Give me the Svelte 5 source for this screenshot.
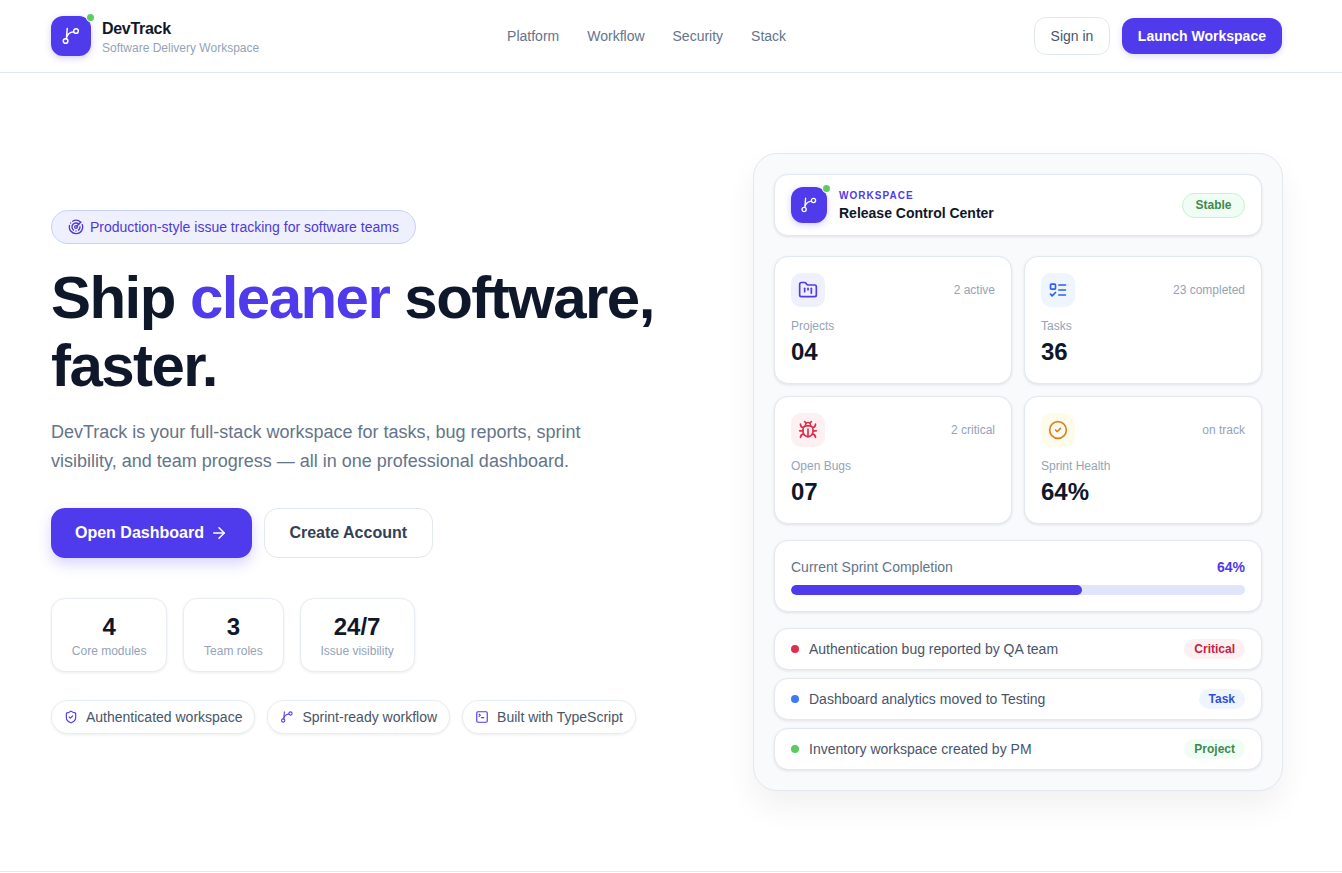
<script>
  const navLinks = ["Platform", "Workflow", "Security", "Stack"]
  const miniStats = [
    { value: "4", label: "Core modules" },
    { value: "3", label: "Team roles" },
    { value: "24/7", label: "Issue visibility" },
  ]
  const statCards = [
    { kind: "projects", tone: "indigo", note: "2 active", label: "Projects", value: "04" },
    { kind: "tasks", tone: "blue", note: "23 completed", label: "Tasks", value: "36" },
    { kind: "bugs", tone: "red", note: "2 critical", label: "Open Bugs", value: "07" },
    { kind: "health", tone: "amber", note: "on track", label: "Sprint Health", value: "64%" },
  ]
  const activity = [
    { text: "Authentication bug reported by QA team", tag: "Critical", tone: "red" },
    { text: "Dashboard analytics moved to Testing", tag: "Task", tone: "blue" },
    { text: "Inventory workspace created by PM", tag: "Project", tone: "green" },
  ]
  const sprintDone = 64
</script>

{#snippet branch(size)}
  <svg width={size} height={size} viewBox="0 0 24 24" fill="none" stroke="currentColor" stroke-width="1.8" stroke-linecap="round">
    <circle cx="5.5" cy="18" r="2.8" />
    <circle cx="18" cy="6" r="2.8" />
    <path d="M6.5 15.2 7.5 3" />
    <path d="M15.2 6.8C11 7.5 8 9 7 13" />
  </svg>
{/snippet}

{#snippet statIcon(kind)}
  <svg width="20" height="20" viewBox="0 0 24 24" fill="none" stroke="currentColor" stroke-width="2" stroke-linecap="round" stroke-linejoin="round">
    {#if kind == "projects"}
      <path d="M4 20h16a2 2 0 0 0 2-2V8a2 2 0 0 0-2-2h-7.93a2 2 0 0 1-1.66-.9l-.82-1.2A2 2 0 0 0 7.93 3H4a2 2 0 0 0-2 2v13c0 1.1.9 2 2 2Z" />
      <path d="M8 10v4" /><path d="M12 10v2" /><path d="M16 10v6" />
    {:else if kind == "tasks"}
      <rect x="3" y="5" width="6" height="6" rx="1" />
      <path d="m3 17 2 2 4-4" /><path d="M13 6h8" /><path d="M13 12h8" /><path d="M13 18h8" />
    {:else if kind == "bugs"}
      <path d="m8 2 1.88 1.88" /><path d="M14.12 3.88 16 2" />
      <path d="M9 7.13v-1a3.003 3.003 0 1 1 6 0v1" />
      <path d="M12 20c-3.3 0-6-2.7-6-6v-3a4 4 0 0 1 4-4h4a4 4 0 0 1 4 4v3c0 3.3-2.7 6-6 6" />
      <path d="M12 20v-9" /><path d="M6.53 9C4.6 8.8 3 7.1 3 5" /><path d="M6 13H2" />
      <path d="M3 21c0-2.1 1.7-3.9 3.8-4" /><path d="M20.97 5c0 2.1-1.6 3.8-3.5 4" />
      <path d="M22 13h-4" /><path d="M17.2 17c2.1.1 3.8 1.9 3.8 4" />
    {:else}
      <circle cx="12" cy="12" r="10" /><path d="m9 12 2 2 4-4" />
    {/if}
  </svg>
{/snippet}

<div class="page">
  <header>
    <div class="brand">
      <div class="logo">
        {@render branch(20)}
        <span class="online"></span>
      </div>
      <div>
        <div class="brand-name">DevTrack</div>
        <div class="brand-sub">Software Delivery Workspace</div>
      </div>
    </div>
    <nav>
      {#each navLinks as link}
        <a href="#top">{link}</a>
      {/each}
    </nav>
    <div class="actions">
      <button class="signin">Sign in</button>
      <button class="launch">Launch Workspace</button>
    </div>
  </header>

  <main>
    <section class="hero">
      <div class="badge">
        <svg width="16" height="16" viewBox="0 0 24 24" fill="none" stroke="currentColor" stroke-width="2" stroke-linecap="round" stroke-linejoin="round">
          <path d="M19.07 4.93A10 10 0 0 0 6.99 3.34" /><path d="M4 6h.01" />
          <path d="M2.29 9.62A10 10 0 1 0 21.31 8.35" /><path d="M16.24 7.76A6 6 0 1 0 8.23 16.67" />
          <path d="M12 18h.01" /><path d="M17.99 11.66A6 6 0 0 1 15.77 16.67" />
          <circle cx="12" cy="12" r="2" /><path d="m13.41 10.59 5.66-5.66" />
        </svg>
        Production-style issue tracking for software teams
      </div>
      <h1>Ship <span>cleaner</span> software, faster.</h1>
      <p class="lead">DevTrack is your full-stack workspace for tasks, bug reports, sprint visibility, and team progress — all in one professional dashboard.</p>
      <div class="cta">
        <button class="primary">
          Open Dashboard
          <svg width="18" height="18" viewBox="0 0 24 24" fill="none" stroke="currentColor" stroke-width="2" stroke-linecap="round" stroke-linejoin="round"><path d="M5 12h14" /><path d="m12 5 7 7-7 7" /></svg>
        </button>
        <button class="secondary">Create Account</button>
      </div>
      <div class="mini-stats">
        {#each miniStats as s}
          <div class="mini">
            <div class="mini-value">{s.value}</div>
            <div class="mini-label">{s.label}</div>
          </div>
        {/each}
      </div>
      <div class="chips">
        <div class="chip">
          <svg width="14" height="14" viewBox="0 0 24 24" fill="none" stroke="currentColor" stroke-width="2" stroke-linecap="round" stroke-linejoin="round">
            <path d="M20 13c0 5-3.5 7.5-7.66 8.95a1 1 0 0 1-.67-.01C7.5 20.5 4 18 4 13V6a1 1 0 0 1 1-1c2 0 4.5-1.2 6.24-2.72a1.17 1.17 0 0 1 1.52 0C14.51 3.81 17 5 19 5a1 1 0 0 1 1 1z" />
            <path d="m9 12 2 2 4-4" />
          </svg>
          Authenticated workspace
        </div>
        <div class="chip">
          {@render branch(14)}
          Sprint-ready workflow
        </div>
        <div class="chip">
          <svg width="14" height="14" viewBox="0 0 24 24" fill="none" stroke="currentColor" stroke-width="2" stroke-linecap="round" stroke-linejoin="round">
            <path d="m7 11 2-2-2-2" /><path d="M11 13h4" /><rect x="3" y="3" width="18" height="18" rx="2" />
          </svg>
          Built with TypeScript
        </div>
      </div>
    </section>

    <section class="panel">
      <div class="card panel-head">
        <div class="logo small">
          {@render branch(18)}
          <span class="online"></span>
        </div>
        <div class="panel-title">
          <div class="eyebrow">WORKSPACE</div>
          <div class="release">Release Control Center</div>
        </div>
        <span class="stable">Stable</span>
      </div>

      <div class="stat-grid">
        {#each statCards as c}
          <div class="card stat">
            <div class="stat-top">
              <div class="stat-icon {c.tone}">{@render statIcon(c.kind)}</div>
              <span class="stat-note">{c.note}</span>
            </div>
            <div class="stat-label">{c.label}</div>
            <div class="stat-value">{c.value}</div>
          </div>
        {/each}
      </div>

      <div class="card sprint">
        <div class="sprint-top">
          <span>Current Sprint Completion</span>
          <b>{sprintDone}%</b>
        </div>
        <div class="track"><div class="fill" style="width: {sprintDone}%"></div></div>
      </div>

      <div class="rows">
        {#each activity as a}
          <div class="card row">
            <span class="dot {a.tone}"></span>
            <span class="row-text">{a.text}</span>
            <span class="tag {a.tone}">{a.tag}</span>
          </div>
        {/each}
      </div>
    </section>
  </main>
</div>

<style>
  :global(body) {
    margin: 0;
    background: #fff;
    font-family: "Liberation Sans", Arial, sans-serif;
    color: #0f172a;
  }
  .page {
    height: 872px;
    display: flex;
    flex-direction: column;
    overflow: hidden;
  }
  header {
    height: 72px;
    flex: none;
    border-bottom: 1px solid #e2e8f0;
    padding: 0 60px 0 51px;
    display: flex;
    align-items: center;
    justify-content: space-between;
  }
  .brand {
    display: flex;
    align-items: center;
    gap: 11px;
  }
  .logo {
    position: relative;
    width: 40px;
    height: 40px;
    border-radius: 12px;
    background: #4f3bec;
    color: #fff;
    display: flex;
    align-items: center;
    justify-content: center;
    box-shadow: 0 2px 6px rgba(79, 57, 246, 0.25);
  }
  .logo.small {
    width: 36px;
    height: 36px;
    flex: none;
  }
  .online {
    position: absolute;
    top: -2.5px;
    right: -2.5px;
    width: 7px;
    height: 7px;
    border-radius: 50%;
    background: #5ecb62;
    box-shadow: 0 0 0 1px #fff;
  }
  .brand-name {
    padding-top: 2px;
    font-size: 16px;
    font-weight: 700;
    line-height: 22px;
    letter-spacing: -0.3px;
    color: #0f172a;
  }
  .brand-sub {
    font-size: 12px;
    line-height: 16px;
    color: #94a3b8;
  }
  nav {
    display: flex;
    gap: 28px;
  }
  nav a {
    font-size: 14px;
    color: #64748b;
    text-decoration: none;
  }
  .actions {
    display: flex;
    align-items: center;
    gap: 12px;
  }
  button {
    font-family: inherit;
    cursor: pointer;
  }
  .signin {
    height: 38px;
    padding: 0 15.5px;
    background: #fff;
    border: 1px solid #e2e8f0;
    border-radius: 12px;
    font-size: 14px;
    color: #475569;
  }
  .launch {
    height: 36px;
    padding: 0 16px;
    background: #4f3bec;
    border: none;
    border-radius: 12px;
    font-size: 14px;
    font-weight: 700;
    color: #fff;
    box-shadow: 0 2px 6px rgba(79, 57, 246, 0.2);
  }
  main {
    flex: 1;
    padding: 0 59px 0 51px;
    display: flex;
    align-items: center;
    justify-content: space-between;
    border-bottom: 1px solid #e2e8f0;
    min-height: 0;
  }
  .hero {
    width: 640px;
  }
  .badge {
    display: inline-flex;
    align-items: center;
    gap: 6px;
    box-sizing: border-box;
    height: 34px;
    padding: 0 16px;
    border: 1px solid #c6d2fb;
    border-radius: 999px;
    background: #eef0fd;
    font-size: 14px;
    color: #4f39d6;
  }
  h1 {
    margin: 20px 0 0;
    font-size: 60px;
    line-height: 68px;
    font-weight: 700;
    letter-spacing: -1.55px;
    color: #0f172a;
    max-width: 640px;
  }
  h1 span {
    color: #4f3bec;
  }
  .lead {
    margin: 18px 0 0;
    max-width: 576px;
    font-size: 18px;
    line-height: 29px;
    color: #64748b;
  }
  .cta {
    display: flex;
    gap: 12px;
    margin-top: 32px;
  }
  .primary {
    height: 50px;
    padding: 0 24px;
    display: flex;
    align-items: center;
    gap: 6px;
    background: #4f3bec;
    border: none;
    border-radius: 14px;
    font-size: 16px;
    font-weight: 700;
    color: #fff;
    box-shadow: 0 6px 14px rgba(79, 57, 246, 0.22);
  }
  .secondary {
    height: 50px;
    padding: 0 24.5px;
    background: #fff;
    border: 1px solid #e2e8f0;
    border-radius: 14px;
    font-size: 16px;
    font-weight: 700;
    color: #334155;
  }
  .mini-stats {
    display: flex;
    gap: 16px;
    margin-top: 40px;
  }
  .mini {
    height: 74px;
    box-sizing: border-box;
    padding: 2px 19.8px 0;
    border: 1px solid #e8edf4;
    border-radius: 14px;
    background: #fff;
    box-shadow: 0 1px 3px rgba(15, 23, 42, 0.08);
    display: flex;
    flex-direction: column;
    align-items: center;
    justify-content: center;
  }
  .mini-value {
    font-size: 24px;
    line-height: 28px;
    font-weight: 700;
    color: #0f172a;
  }
  .mini-label {
    margin-top: 2px;
    font-size: 12px;
    line-height: 16px;
    color: #94a3b8;
  }
  .chips {
    display: flex;
    gap: 12px;
    margin-top: 28px;
  }
  .chip {
    box-sizing: border-box;
    height: 34px;
    padding: 0 12px;
    display: flex;
    align-items: center;
    gap: 8px;
    border: 1px solid #e8edf4;
    border-radius: 999px;
    background: #fff;
    box-shadow: 0 1px 3px rgba(15, 23, 42, 0.08);
    font-size: 14px;
    color: #475569;
  }
  .chip svg {
    color: #4f3bec;
  }
  .panel {
    width: 530px;
    box-sizing: border-box;
    padding: 20px;
    border: 1px solid #e2e8f0;
    border-radius: 24px;
    background: #f8fafc;
    box-shadow: 0 16px 32px rgba(15, 23, 42, 0.06);
  }
  .card {
    background: #fff;
    border: 1px solid #e2e8f0;
    box-shadow: 0 1px 3px rgba(15, 23, 42, 0.1);
    box-sizing: border-box;
  }
  .panel-head {
    height: 62px;
    padding: 0 16px;
    border-radius: 14px;
    display: flex;
    align-items: center;
    gap: 12px;
  }
  .panel-title {
    flex: 1;
    padding-top: 2px;
  }
  .eyebrow {
    font-size: 10px;
    line-height: 14px;
    font-weight: 700;
    letter-spacing: 1.05px;
    color: #4f3bec;
  }
  .release {
    font-size: 14px;
    line-height: 20px;
    font-weight: 700;
    color: #0f172a;
  }
  .stable {
    padding: 0 12.5px;
    height: 25px;
    line-height: 23px;
    box-sizing: border-box;
    border: 1px solid #c8f2d0;
    border-radius: 999px;
    background: #f0fdf4;
    font-size: 12px;
    font-weight: 700;
    color: #3f8a4b;
  }
  .stat-grid {
    display: grid;
    grid-template-columns: 1fr 1fr;
    gap: 12px;
    margin-top: 20px;
  }
  .stat {
    height: 128px;
    padding: 16px;
    border-radius: 14px;
  }
  .stat-top {
    display: flex;
    justify-content: space-between;
    align-items: center;
  }
  .stat-icon {
    width: 34px;
    height: 34px;
    border-radius: 10px;
    display: flex;
    align-items: center;
    justify-content: center;
  }
  .stat-icon.indigo {
    background: #eef0fd;
    color: #4f3bec;
  }
  .stat-icon.blue {
    background: #eff5ff;
    color: #2f5ff0;
  }
  .stat-icon.red {
    background: #fdf0f3;
    color: #df2e4f;
  }
  .stat-icon.amber {
    background: #fffbeb;
    color: #d9822b;
  }
  .stat-note {
    font-size: 12px;
    color: #94a3b8;
  }
  .stat-label {
    margin-top: 11px;
    font-size: 12px;
    line-height: 16px;
    color: #94a3b8;
  }
  .stat-value {
    margin-top: 3px;
    font-size: 24px;
    line-height: 30px;
    font-weight: 700;
    color: #0f172a;
  }
  .sprint {
    margin-top: 16px;
    height: 72px;
    padding: 16px;
    border-radius: 14px;
  }
  .sprint-top {
    display: flex;
    justify-content: space-between;
    font-size: 14px;
    line-height: 20px;
    color: #64748b;
  }
  .sprint-top b {
    font-weight: 700;
    color: #4f3bec;
  }
  .track {
    margin-top: 8px;
    height: 10px;
    border-radius: 999px;
    background: #e0e5fa;
    overflow: hidden;
  }
  .fill {
    height: 100%;
    border-radius: 999px;
    background: #4f3bec;
  }
  .rows {
    margin-top: 16px;
    display: flex;
    flex-direction: column;
    gap: 8px;
  }
  .row {
    height: 42px;
    padding: 0 16px;
    border-radius: 14px;
    display: flex;
    align-items: center;
    gap: 10px;
  }
  .dot {
    width: 8px;
    height: 8px;
    border-radius: 50%;
  }
  .dot.red {
    background: #df2e4f;
  }
  .dot.blue {
    background: #3b7bf6;
  }
  .dot.green {
    background: #5ecb62;
  }
  .row-text {
    flex: 1;
    font-size: 14px;
    color: #475569;
  }
  .tag {
    height: 20px;
    line-height: 20px;
    padding: 0 10px;
    border-radius: 999px;
    font-size: 12px;
    font-weight: 700;
  }
  .tag.red {
    background: #fdf0f3;
    color: #c4213f;
  }
  .tag.blue {
    background: #eff5ff;
    color: #2d4fdc;
  }
  .tag.green {
    background: #f0fdf4;
    color: #3f8a4b;
  }
</style>
